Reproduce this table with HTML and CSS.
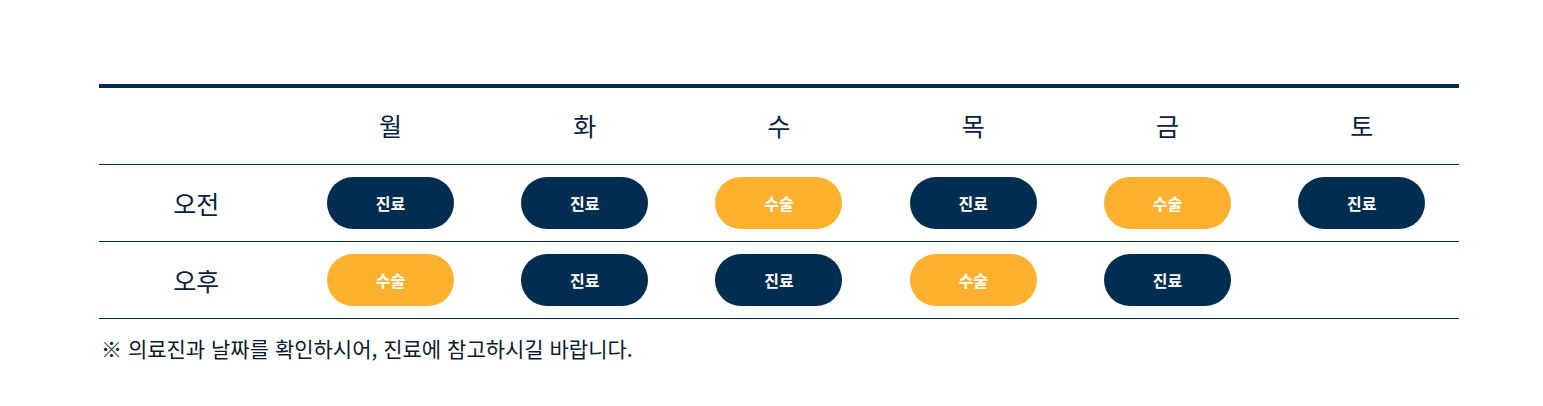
FILE: index.html
```html
<!DOCTYPE html>
<html lang="ko">
<head>
<meta charset="utf-8">
<link rel="stylesheet" href="styles.css">
</head>
<body>
<div class="wrap">
  <div class="table">
    <div class="row head">
      <div class="cell"></div>
      <div class="cell">월</div>
      <div class="cell">화</div>
      <div class="cell">수</div>
      <div class="cell">목</div>
      <div class="cell">금</div>
      <div class="cell">토</div>
    </div>
    <div class="row">
      <div class="cell label">오전</div>
      <div class="cell"><span class="pill navy">진료</span></div>
      <div class="cell"><span class="pill navy">진료</span></div>
      <div class="cell"><span class="pill orange">수술</span></div>
      <div class="cell"><span class="pill navy">진료</span></div>
      <div class="cell"><span class="pill orange">수술</span></div>
      <div class="cell"><span class="pill navy">진료</span></div>
    </div>
    <div class="row">
      <div class="cell label">오후</div>
      <div class="cell"><span class="pill orange">수술</span></div>
      <div class="cell"><span class="pill navy">진료</span></div>
      <div class="cell"><span class="pill navy">진료</span></div>
      <div class="cell"><span class="pill orange">수술</span></div>
      <div class="cell"><span class="pill navy">진료</span></div>
      <div class="cell"></div>
    </div>
  </div>
  <p class="note">※ 의료진과 날짜를 확인하시어, 진료에 참고하시길 바랍니다.</p>
</div>
</body>
</html>
```
FILE: styles.css
```css
* { box-sizing: border-box; }
html, body { margin: 0; padding: 0; background: #fff; }
body {
  font-family: "Noto Sans CJK KR", "Noto Sans", sans-serif;
  color: #0a2240;
}
.wrap {
  padding: 84px 84px 0 99px;
}
.table {
  width: 1360px;
  border-top: 4px solid #012c50;
}
.row {
  display: grid;
  grid-template-columns: repeat(7, 1fr);
  border-bottom: 1px solid #012c50;
  height: 77px;
}
.cell {
  display: flex;
  align-items: center;
  justify-content: center;
  font-size: 25px;
  color: #0a2240;
}
.head .cell { padding-bottom: 2px; }
.pill {
  display: flex;
  align-items: center;
  justify-content: center;
  width: 127px;
  height: 52px;
  border-radius: 26px;
  color: #fff;
  font-size: 16px;
  font-weight: 700;
}
.navy { background: #012d50; }
.orange { background: #feb02f; }
.note {
  margin: 14px 0 0 2px;
  font-size: 21px;
  font-weight: 400;
  color: #0a1a30;
  letter-spacing: 0;
}
```
